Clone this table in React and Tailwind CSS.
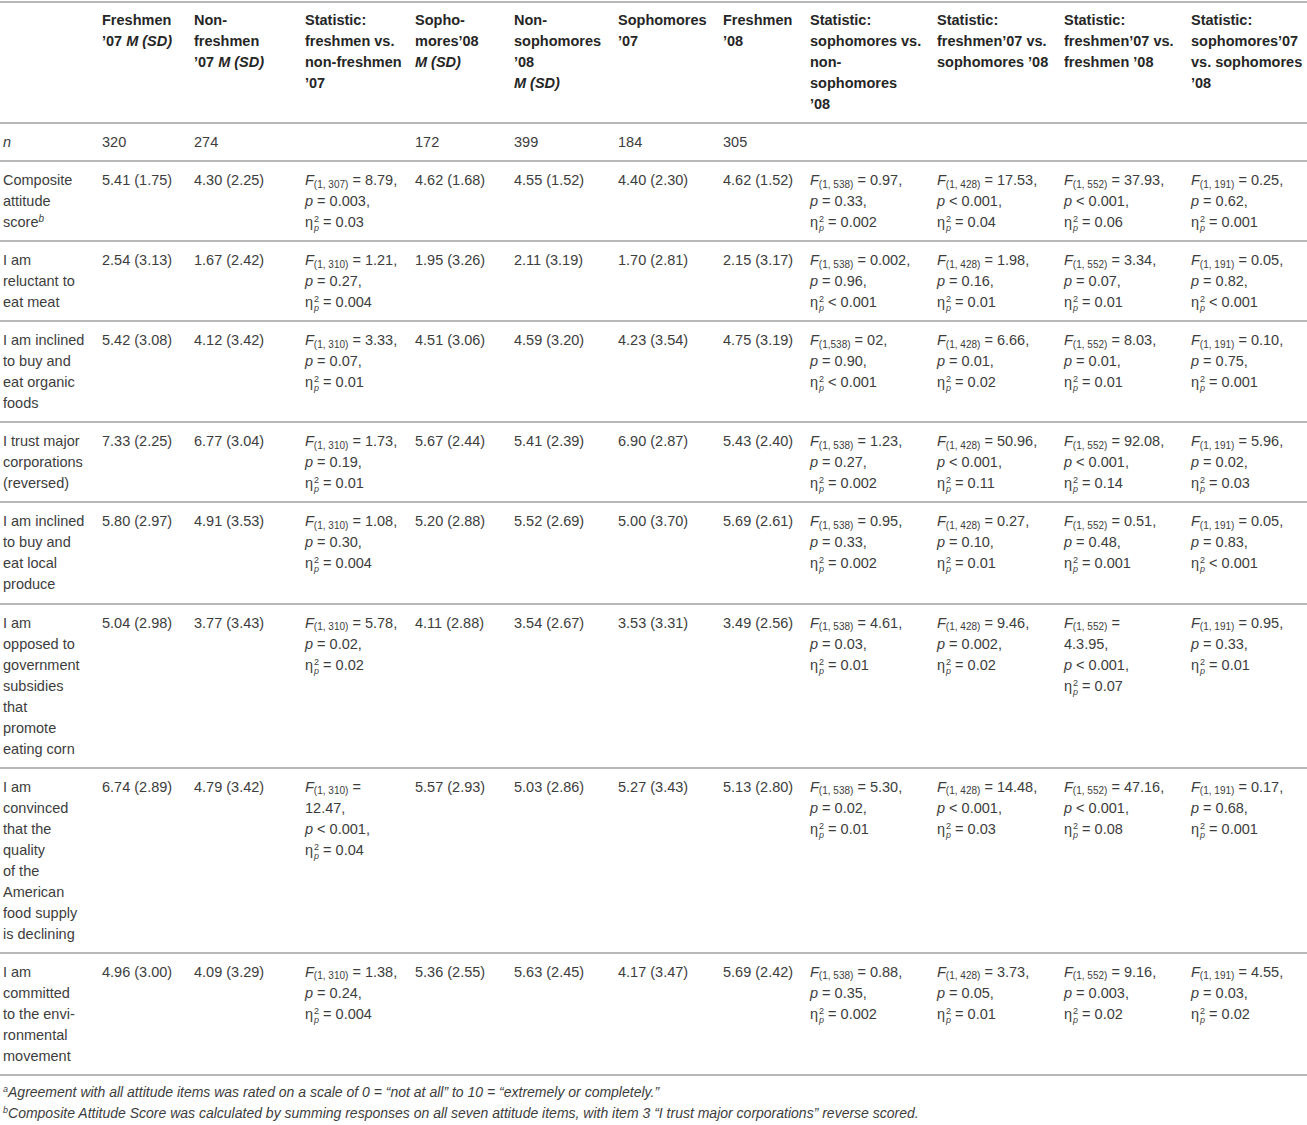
import React from "react";

const widths = [99, 92, 111, 110, 99, 104, 105, 87, 127, 127, 127, 119];

const M = () => <i>M (SD)</i>;

const headers = [
  [],
  ["Freshmen", <>’07 <M /></>],
  ["Non-", "freshmen", <>’07 <M /></>],
  ["Statistic:", "freshmen vs.", "non-freshmen", "’07"],
  ["Sopho-", "mores’08", <M />],
  ["Non-", "sophomores", "’08", <M />],
  ["Sophomores", "’07"],
  ["Freshmen", "’08"],
  ["Statistic:", "sophomores vs.", "non-", "sophomores", "’08"],
  ["Statistic:", "freshmen’07 vs.", "sophomores ’08"],
  ["Statistic:", "freshmen’07 vs.", "freshmen ’08"],
  ["Statistic:", "sophomores’07", "vs. sophomores", "’08"],
];

// stat: [df, F, p, eta, splitF]
const s = (df, f, p, eta, split) => ({ df, f, p, eta, split });

const rows = [
  {
    label: [<i>n</i>],
    cells: ["320", "274", "", "172", "399", "184", "305", "", "", "", ""],
  },
  {
    label: ["Composite", "attitude", <>score<sup className="italic text-[10px]">b</sup></>],
    cells: [
      "5.41 (1.75)", "4.30 (2.25)", s("1, 307", "8.79", "= 0.003", "= 0.03"),
      "4.62 (1.68)", "4.55 (1.52)", "4.40 (2.30)", "4.62 (1.52)",
      s("1, 538", "0.97", "= 0.33", "= 0.002"),
      s("1, 428", "17.53", "< 0.001", "= 0.04"),
      s("1, 552", "37.93", "< 0.001", "= 0.06"),
      s("1, 191", "0.25", "= 0.62", "= 0.001"),
    ],
  },
  {
    label: ["I am", "reluctant to", "eat meat"],
    cells: [
      "2.54 (3.13)", "1.67 (2.42)", s("1, 310", "1.21", "= 0.27", "= 0.004"),
      "1.95 (3.26)", "2.11 (3.19)", "1.70 (2.81)", "2.15 (3.17)",
      s("1, 538", "0.002", "= 0.96", "< 0.001"),
      s("1, 428", "1.98", "= 0.16", "= 0.01"),
      s("1, 552", "3.34", "= 0.07", "= 0.01"),
      s("1, 191", "0.05", "= 0.82", "< 0.001"),
    ],
  },
  {
    label: ["I am inclined", "to buy and", "eat organic", "foods"],
    cells: [
      "5.42 (3.08)", "4.12 (3.42)", s("1, 310", "3.33", "= 0.07", "= 0.01"),
      "4.51 (3.06)", "4.59 (3.20)", "4.23 (3.54)", "4.75 (3.19)",
      s("1,538", "02", "= 0.90", "< 0.001"),
      s("1, 428", "6.66", "= 0.01", "= 0.02"),
      s("1, 552", "8.03", "= 0.01", "= 0.01"),
      s("1, 191", "0.10", "= 0.75", "= 0.001"),
    ],
  },
  {
    label: ["I trust major", "corporations", "(reversed)"],
    cells: [
      "7.33 (2.25)", "6.77 (3.04)", s("1, 310", "1.73", "= 0.19", "= 0.01"),
      "5.67 (2.44)", "5.41 (2.39)", "6.90 (2.87)", "5.43 (2.40)",
      s("1, 538", "1.23", "= 0.27", "= 0.002"),
      s("1, 428", "50.96", "< 0.001", "= 0.11"),
      s("1, 552", "92.08", "< 0.001", "= 0.14"),
      s("1, 191", "5.96", "= 0.02", "= 0.03"),
    ],
  },
  {
    label: ["I am inclined", "to buy and", "eat local", "produce"],
    cells: [
      "5.80 (2.97)", "4.91 (3.53)", s("1, 310", "1.08", "= 0.30", "= 0.004"),
      "5.20 (2.88)", "5.52 (2.69)", "5.00 (3.70)", "5.69 (2.61)",
      s("1, 538", "0.95", "= 0.33", "= 0.002"),
      s("1, 428", "0.27", "= 0.10", "= 0.01"),
      s("1, 552", "0.51", "= 0.48", "= 0.001"),
      s("1, 191", "0.05", "= 0.83", "< 0.001"),
    ],
  },
  {
    label: ["I am", "opposed to", "government", "subsidies", "that", "promote", "eating corn"],
    cells: [
      "5.04 (2.98)", "3.77 (3.43)", s("1, 310", "5.78", "= 0.02", "= 0.02"),
      "4.11 (2.88)", "3.54 (2.67)", "3.53 (3.31)", "3.49 (2.56)",
      s("1, 538", "4.61", "= 0.03", "= 0.01"),
      s("1, 428", "9.46", "= 0.002", "= 0.02"),
      s("1, 552", "4.3.95", "< 0.001", "= 0.07", true),
      s("1, 191", "0.95", "= 0.33", "= 0.01"),
    ],
  },
  {
    label: ["I am", "convinced", "that the", "quality", "of the", "American", "food supply", "is declining"],
    cells: [
      "6.74 (2.89)", "4.79 (3.42)", s("1, 310", "12.47", "< 0.001", "= 0.04", true),
      "5.57 (2.93)", "5.03 (2.86)", "5.27 (3.43)", "5.13 (2.80)",
      s("1, 538", "5.30", "= 0.02", "= 0.01"),
      s("1, 428", "14.48", "< 0.001", "= 0.03"),
      s("1, 552", "47.16", "< 0.001", "= 0.08"),
      s("1, 191", "0.17", "= 0.68", "= 0.001"),
    ],
  },
  {
    label: ["I am", "committed", "to the envi-", "ronmental", "movement"],
    cells: [
      "4.96 (3.00)", "4.09 (3.29)", s("1, 310", "1.38", "= 0.24", "= 0.004"),
      "5.36 (2.55)", "5.63 (2.45)", "4.17 (3.47)", "5.69 (2.42)",
      s("1, 538", "0.88", "= 0.35", "= 0.002"),
      s("1, 428", "3.73", "= 0.05", "= 0.01"),
      s("1, 552", "9.16", "= 0.003", "= 0.02"),
      s("1, 191", "4.55", "= 0.03", "= 0.02"),
    ],
  },
];

// η with stacked superscript 2 and subscript p
function Eta() {
  return (
    <>
      η
      <span className="relative inline-block w-[7px] mr-[3px] text-[9px] leading-[9px]">
        <span className="absolute left-[1px] -top-[12px]">2</span>
        <i className="absolute left-[1px] -top-[3px]">p</i>
      </span>
    </>
  );
}

function Stat({ v }) {
  const F = (
    <>
      <i>F</i>
      <sub className="text-[10px]">({v.df})</sub> =
    </>
  );
  return (
    <>
      {v.split ? (
        <>
          <div>{F}</div>
          <div>{v.f},</div>
        </>
      ) : (
        <div>
          {F} {v.f},
        </div>
      )}
      <div>
        <i>p</i> {v.p},
      </div>
      <div>
        <Eta />
        {v.eta}
      </div>
    </>
  );
}

export default function App() {
  return (
    <div className="w-[1307px] bg-white pt-[1px] font-['Liberation_Sans',Arial,sans-serif] text-[14.5px] leading-[21px] text-[#3d3d3d]">
      <table className="w-[1307px] table-fixed border-collapse">
        <colgroup>
          {widths.map((w, i) => (
            <col key={i} style={{ width: w }} />
          ))}
        </colgroup>
        <thead>
          <tr className="border-y-2 border-[#b8b8b8]">
            {headers.map((h, i) => (
              <th key={i} className="text-left align-top font-bold text-[#262626] whitespace-nowrap pl-[3px] pt-[7px] pb-[7px]">
                {h.map((line, j) => (
                  <div key={j}>{line}</div>
                ))}
              </th>
            ))}
          </tr>
        </thead>
        <tbody>
          {rows.map((r, i) => (
            <tr key={i} className="border-b-2 border-[#b8b8b8]">
              <td className="align-top whitespace-nowrap pl-[3px] pt-[8px] pb-[7.1px]">
                {r.label.map((line, j) => (
                  <div key={j}>{line}</div>
                ))}
              </td>
              {r.cells.map((c, j) => (
                <td key={j} className="align-top whitespace-nowrap pl-[3px] pt-[8px] pb-[7.1px]">
                  {typeof c === "string" ? c : <Stat v={c} />}
                </td>
              ))}
            </tr>
          ))}
        </tbody>
      </table>
      <div className="pt-[6px] pl-[3px] italic text-[14px] leading-[21px]">
        <div>
          <sup className="text-[9px]">a</sup>Agreement with all attitude items was rated on a scale of 0 = “not at all” to 10 = “extremely or completely.”
        </div>
        <div>
          <sup className="text-[9px]">b</sup>Composite Attitude Score was calculated by summing responses on all seven attitude items, with item 3 “I trust major corporations” reverse scored.
        </div>
      </div>
    </div>
  );
}
